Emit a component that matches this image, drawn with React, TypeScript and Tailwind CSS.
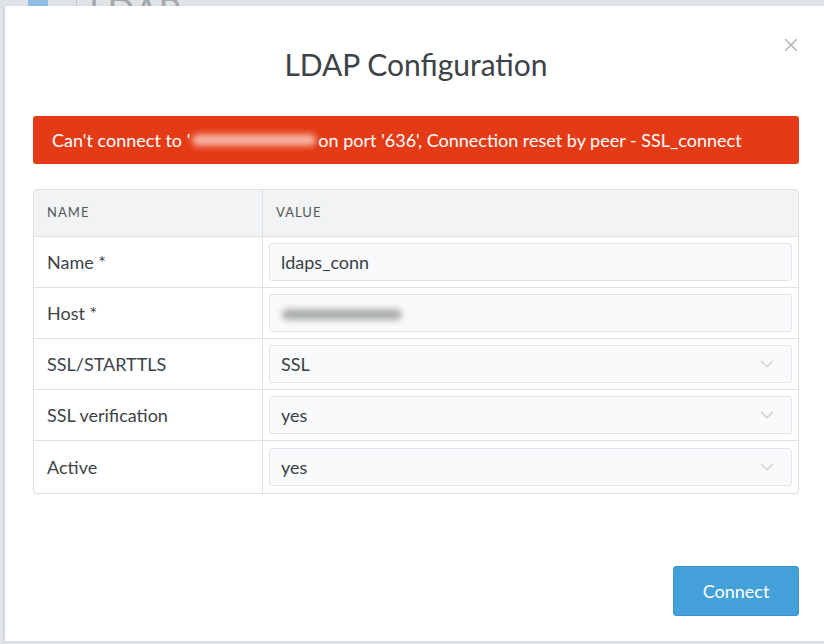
import { ChevronDown, X } from "lucide-react";

const font = { fontFamily: "Lato, 'Open Sans', sans-serif" };

function Field({ value, select, blurred }: { value?: string; select?: boolean; blurred?: boolean }) {
  return (
    <div className="flex h-[38px] items-center justify-between rounded-[3px] border border-[#e1e5e9] bg-[#f9fafb] pl-[11px] pr-[13px] text-[18px] text-[#3a3f45]">
      {blurred ? (
        <div className="ml-[1px] mt-[2px] h-[11px] w-[120px] rounded-full bg-[#a9abad] blur-[3px]" />
      ) : (
        <span>{value}</span>
      )}
      {select && <ChevronDown className="h-[22px] w-[22px] text-[#cdd0d3]" strokeWidth={1.5} />}
    </div>
  );
}

const rows = [
  { label: "Name *", value: "ldaps_conn" },
  { label: "Host *", blurred: true },
  { label: "SSL/STARTTLS", value: "SSL", select: true },
  { label: "SSL verification", value: "yes", select: true },
  { label: "Active", value: "yes", select: true },
];

export default function App() {
  return (
    <div className="flex h-[644px] w-[824px] flex-col overflow-hidden bg-[#e1e4e7]" style={font}>
      <div className="flex h-[6px] shrink-0 items-end overflow-hidden">
        <div className="ml-[28px] h-[20px] w-[20px] shrink-0 bg-[#8fbde6]" />
        <div className="ml-[28px] h-[20px] w-px shrink-0 bg-[#b9c9d8]" />
        <div className="ml-[12px] mb-[-22px] text-[36px] leading-none text-[#a3a8ad]">LDAP</div>
      </div>
      <div className="ml-[4px] flex h-[635px] shrink-0 flex-col border-l border-[#d3d7db] bg-white pl-[28px] pr-[25px] shadow-[-1px_0_2px_rgba(0,0,0,0.06)]">
        <div className="relative flex h-[110px] items-center justify-center pt-[6px]">
          <h1 className="text-[30px] text-[#3c4248]">LDAP Configuration</h1>
          <X className="absolute right-[-3px] top-[28px] h-[22px] w-[22px] text-[#b3b5b7]" strokeWidth={1.6} />
        </div>
        <div className="flex h-[48px] items-center rounded-[3px] bg-[#e43b16] pl-[19px] text-[18px] text-white">
          <span>Can't connect to '</span>
          <span className="mx-[2px] inline-block h-[12px] w-[124px] rounded-full bg-[#f6b2a2] blur-[3px]" />
          <span>on port '636', Connection reset by peer - SSL_connect</span>
        </div>
        <div className="mt-[25px] overflow-hidden rounded-[4px] border border-[#dce1e5]">
          <div className="grid h-[47px] grid-cols-[229px_1fr] border-b border-[#dce1e5] bg-[#f1f3f5] text-[13px] tracking-[0.08em] text-[#50565c]">
            <div className="flex items-center border-r border-[#dce1e5] pl-[13px]">NAME</div>
            <div className="flex items-center pl-[13px]">VALUE</div>
          </div>
          {rows.map((r, i) => (
            <div
              key={r.label}
              className={`grid grid-cols-[229px_1fr] ${i < rows.length - 1 ? "h-[51px] border-b border-[#dce1e5]" : "h-[52px]"}`}
            >
              <div className="flex items-center border-r border-[#dce1e5] pl-[13px] text-[18px] text-[#3d4349]">{r.label}</div>
              <div className="flex items-center pl-[6px] pr-[6px]">
                <div className="w-full">
                  <Field value={r.value} select={r.select} blurred={r.blurred} />
                </div>
              </div>
            </div>
          ))}
        </div>
        <div className="flex flex-1 items-end justify-end pb-[25px]">
          <button className="h-[50px] w-[126px] rounded-[3px] border border-[#3d94cc] bg-[#44a0d8] text-[18px] text-white">
            Connect
          </button>
        </div>
      </div>
    </div>
  );
}
